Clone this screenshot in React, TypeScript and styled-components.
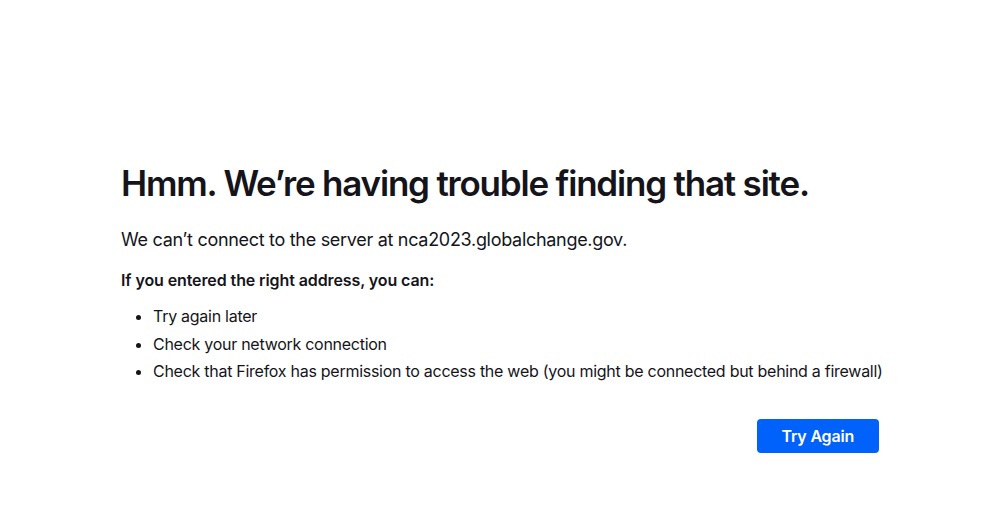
import React from "react";
import styled, { createGlobalStyle } from "styled-components";

const GlobalStyle = createGlobalStyle`
  html, body {
    margin: 0;
    padding: 0;
    background: #ffffff;
    color: #15141a;
    font-family: Inter, "Noto Sans", sans-serif;
  }
`;

const Page = styled.div`
  height: 520px;
  display: flex;
  flex-direction: column;
  align-items: center;
  padding-top: 158px;
  box-sizing: border-box;
`;

const Container = styled.div`
  width: 758px;
  display: flex;
  flex-direction: column;
`;

const Title = styled.h1`
  margin: 0;
  font-size: 35px;
  font-weight: 600;
  line-height: 50px;
  letter-spacing: -1.2px;
`;

const Lead = styled.p`
  margin: 18px 0 0;
  font-size: 18px;
  line-height: 28px;
  letter-spacing: -0.3px;
`;

const Subhead = styled.p`
  margin: 14px 0 0;
  font-size: 16px;
  font-weight: 600;
  line-height: 24px;
  letter-spacing: -0.1px;
`;

const List = styled.ul`
  margin: 12px 0 0;
  padding-left: 32px;
  font-size: 16px;
  line-height: 24px;
  letter-spacing: -0.27px;

  li {
    margin-bottom: 3.5px;
    white-space: nowrap;
  }
`;

const Actions = styled.div`
  display: flex;
  justify-content: flex-end;
  margin-top: 32px;
`;

const Button = styled.button`
  background: #0062fa;
  color: #ffffff;
  border: none;
  border-radius: 4px;
  height: 34px;
  padding: 0 25px;
  font-family: inherit;
  font-size: 16px;
  font-weight: 600;
  letter-spacing: -0.2px;
  cursor: pointer;
`;

export default function App() {
  return (
    <>
      <GlobalStyle />
      <Page>
        <Container>
          <Title>Hmm. We’re having trouble finding that site.</Title>
          <Lead>We can’t connect to the server at nca2023.globalchange.gov.</Lead>
          <Subhead>If you entered the right address, you can:</Subhead>
          <List>
            <li>Try again later</li>
            <li>Check your network connection</li>
            <li>Check that Firefox has permission to access the web (you might be connected but behind a firewall)</li>
          </List>
          <Actions>
            <Button>Try Again</Button>
          </Actions>
        </Container>
      </Page>
    </>
  );
}
